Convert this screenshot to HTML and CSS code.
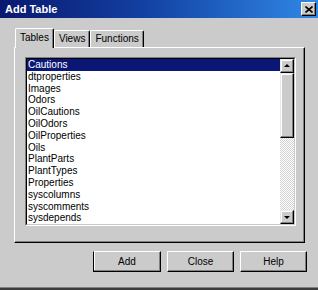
FILE: index.html
```html
<!DOCTYPE html>
<html>
<head>
<meta charset="utf-8">
<title>Add Table</title>
<link rel="stylesheet" href="styles.css">
</head>
<body>
<div class="window">
  <div class="titlebar">
    <span class="title">Add Table</span>
    <button class="close-btn" aria-label="Close">
      <svg width="8" height="7" viewBox="0 0 8 7"><path d="M0.5 0.5 L7.5 6.5 M7.5 0.5 L0.5 6.5" stroke="#000" stroke-width="1.6" fill="none"/></svg>
    </button>
  </div>
  <div class="content">
    <div class="tabs">
      <div class="tab active">Tables</div>
      <div class="tab">Views</div>
      <div class="tab">Functions</div>
    </div>
    <div class="panel">
      <div class="listbox">
        <div class="listbox-inner">
          <ul class="items">
            <li class="selected">Cautions</li>
            <li>dtproperties</li>
            <li>Images</li>
            <li>Odors</li>
            <li>OilCautions</li>
            <li>OilOdors</li>
            <li>OilProperties</li>
            <li>Oils</li>
            <li>PlantParts</li>
            <li>PlantTypes</li>
            <li>Properties</li>
            <li>syscolumns</li>
            <li>syscomments</li>
            <li>sysdepends</li>
          </ul>
          <div class="scrollbar">
            <div class="sb-btn"><span class="arrow up"></span></div>
            <div class="sb-thumb"></div>
            <div class="sb-track"></div>
            <div class="sb-btn"><span class="arrow down"></span></div>
          </div>
        </div>
      </div>
    </div>
    <div class="buttons">
      <button class="btn default">Add</button>
      <button class="btn">Close</button>
      <button class="btn">Help</button>
    </div>
  </div>
</div>
</body>
</html>
```

FILE: styles.css
```css
* { box-sizing: border-box; }
html, body { margin: 0; padding: 0; }
body {
  width: 318px;
  height: 290px;
  overflow: hidden;
  background: #cbcbcb;
  font-family: "Liberation Sans", Arial, sans-serif;
  font-size: 10px;
  color: #000;
}
.window {
  width: 318px;
  height: 290px;
  background: #cbcbcb;
  display: flex;
  flex-direction: column;
  border-bottom: 2px solid #3c3c3c;
}
.titlebar {
  height: 18px;
  flex: none;
  display: flex;
  align-items: center;
  justify-content: space-between;
  padding: 0 2px 0 5px;
  background: linear-gradient(to right, #0a186e 0%, #1240a2 45%, #3088e6 100%);
}
.title {
  color: #fff;
  font-weight: bold;
  font-size: 11px;
}
.close-btn {
  width: 15px;
  height: 14px;
  padding: 0;
  background: #cbcbcb;
  border: 1px solid;
  border-color: #fff #000 #000 #fff;
  box-shadow: inset -1px -1px #808080;
  display: flex;
  align-items: center;
  justify-content: center;
}
.content {
  flex: 1;
  display: flex;
  flex-direction: column;
  padding: 10px 13px 0 14px;
  box-shadow: inset 0 -1px #808080;
}
.tabs {
  display: flex;
  align-items: flex-end;
  padding-left: 1px;
  margin-bottom: -1px;
}
.tab {
  height: 17px;
  margin-bottom: 1px;
  padding: 0 4px 1px 4px;
  display: flex;
  align-items: center;
  border-top: 1px solid #fff;
  border-left: 1px solid #fff;
  border-right: 1px solid #000;
  box-shadow: inset -1px 0 #808080;
  border-radius: 2px 2px 0 0;
  background: #cbcbcb;
}
.tab.active {
  height: 20px;
  margin-bottom: 0;
  padding: 0 4px 2px 4px;
  position: relative;
  z-index: 1;
}
.panel {
  border: 1px solid;
  border-color: #fff #000 #000 #fff;
  box-shadow: inset -1px -1px #808080;
  padding: 9px 8px 16px 10px;
}
.listbox {
  height: 169px;
  border: 1px solid;
  border-color: #808080 #fff #fff #808080;
}
.listbox-inner {
  height: 100%;
  display: flex;
  background: #fff;
  border: 1px solid;
  border-color: #000 #c8c8c8 #c8c8c8 #000;
}
.items {
  flex: 1;
  margin: 0;
  padding: 0;
  list-style: none;
  overflow: hidden;
}
.items li {
  height: 11.8px;
  line-height: 11.8px;
  padding-left: 1px;
  white-space: nowrap;
}
.items li.selected {
  background: #0b1776;
  color: #fff;
}
.scrollbar {
  width: 14px;
  display: flex;
  flex-direction: column;
  background: #cbcbcb;
}
.sb-btn, .sb-thumb {
  border: 1px solid;
  border-color: #e8e8e8 #000 #000 #e8e8e8;
  box-shadow: inset -1px -1px #808080, inset 1px 1px #fff;
  background: #cbcbcb;
}
.sb-btn {
  height: 14px;
  display: flex;
  align-items: center;
  justify-content: center;
}
.sb-thumb { height: 65px; }
.sb-track {
  flex: 1;
  background-color: #e6e6e6;
  background-image: repeating-conic-gradient(#ffffff 0 25%, #d2d2d2 0 50%);
  background-size: 2px 2px;
}
.arrow {
  width: 0;
  height: 0;
  border-left: 3px solid transparent;
  border-right: 3px solid transparent;
}
.arrow.up { border-bottom: 3px solid #000; margin-top: -1px; }
.arrow.down { border-top: 3px solid #000; margin-top: 1px; }
.buttons {
  display: flex;
  justify-content: flex-end;
  gap: 6px;
  margin-top: 8px;
  margin-right: -2px;
}
.btn {
  width: 67px;
  height: 21px;
  padding: 0;
  font-family: inherit;
  font-size: 10px;
  color: #000;
  background: #cbcbcb;
  border: 1px solid;
  border-color: #fff #000 #000 #fff;
  box-shadow: inset -1px -1px #808080;
}
.btn.default {
  width: 68px;
  border-color: #fff #000 #000 #000;
  box-shadow: inset -1px -1px #808080, inset 1px 0 #fff;
}
```
